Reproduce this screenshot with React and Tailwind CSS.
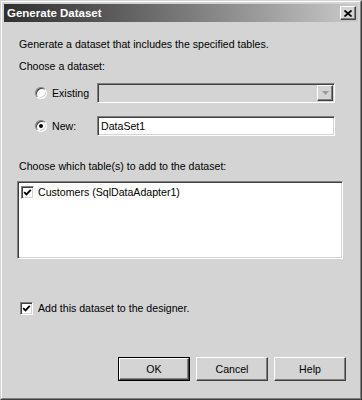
import React from "react";

const font = { fontFamily: '"Liberation Sans", Arial, sans-serif' };

function Radio({ checked }) {
  return (
    <div className="relative w-[12px] h-[12px] rounded-full bg-white border border-t-[#808080] border-l-[#808080] border-r-white border-b-white shadow-[inset_1px_1px_0_#404040,inset_-1px_-1px_0_#d4d4d4] flex items-center justify-center shrink-0">
      {checked && <div className="w-[4px] h-[4px] rounded-full bg-black" />}
    </div>
  );
}

function Check() {
  return (
    <div className="w-[13px] h-[13px] bg-white border border-t-[#808080] border-l-[#808080] border-r-white border-b-white shadow-[inset_1px_1px_0_#404040,inset_-1px_-1px_0_#d4d4d4] flex items-center justify-center shrink-0">
      <svg width="9" height="9" viewBox="0 0 9 9">
        <path d="M1.2 4.2 L3.4 6.4 L7.8 1.8" fill="none" stroke="#000" strokeWidth="1.8" />
      </svg>
    </div>
  );
}

function Button({ children, isDefault }) {
  return (
    <div className={"w-[72px] h-[24px] " + (isDefault ? "border border-black" : "")}>
      <div className="w-full h-full bg-[#d4d4d4] border border-t-white border-l-white border-r-[#404040] border-b-[#404040] shadow-[inset_-1px_-1px_0_#808080] flex items-center justify-center text-[10.6px] text-black">
        {children}
      </div>
    </div>
  );
}

export default function App() {
  return (
    <div style={font} className="w-[362px] h-[400px] bg-[#d4d4d4] border border-t-[#d4d4d4] border-l-[#d4d4d4] border-r-[#404040] border-b-[#404040] text-[10.6px] leading-[13px] text-black">
      <div className="w-full h-full border border-t-white border-l-white border-r-[#808080] border-b-[#808080] p-[2px] flex flex-col">
        {/* Title bar */}
        <div className="h-[18px] bg-linear-to-r from-[#303030] to-[#cacaca] flex items-center justify-between pl-[3px] pr-[2px] shrink-0">
          <span className="text-white font-bold text-[11.5px]">Generate Dataset</span>
          <div className="w-[16px] h-[14px] bg-[#d4d4d4] border border-t-white border-l-white border-r-[#404040] border-b-[#404040] shadow-[inset_-1px_-1px_0_#808080] flex items-center justify-center">
            <svg width="8" height="7" viewBox="0 0 8 7">
              <path d="M0.5 0.5 L7.5 6.5 M7.5 0.5 L0.5 6.5" stroke="#000" strokeWidth="1.7" />
            </svg>
          </div>
        </div>

        {/* Body */}
        <div className="flex flex-col pl-[13px]">
          <div className="mt-[16px] ml-[2px]">Generate a dataset that includes the specified tables.</div>
          <div className="mt-[9px] ml-[2px]">Choose a dataset:</div>

          <div className="mt-[10px] flex items-center h-[20px]">
            <div className="ml-[18px]"><Radio /></div>
            <span className="ml-[5px] w-[45px]">Existing</span>
            <div className="w-[238px] h-[20px] bg-[#d4d4d4] border border-t-[#808080] border-l-[#808080] border-r-white border-b-white shadow-[inset_1px_1px_0_#404040,inset_-1px_-1px_0_#d4d4d4] flex justify-end items-center pr-[1px]">
              <div className="w-[16px] h-[16px] bg-[#d4d4d4] border border-t-white border-l-white border-r-[#404040] border-b-[#404040] shadow-[inset_-1px_-1px_0_#808080] flex items-center justify-center">
                <svg width="7" height="4" viewBox="0 0 7 4">
                  <path d="M0 0 H7 L3.5 4 Z" fill="#9a9a9a" />
                </svg>
              </div>
            </div>
          </div>

          <div className="mt-[13px] flex items-center h-[20px]">
            <div className="ml-[18px]"><Radio checked /></div>
            <span className="ml-[5px] w-[45px]">New:</span>
            <div className="w-[238px] h-[20px] bg-white border border-t-[#808080] border-l-[#808080] border-r-white border-b-white shadow-[inset_1px_1px_0_#404040,inset_-1px_-1px_0_#d4d4d4] flex items-center pl-[3px]">
              DataSet1
            </div>
          </div>

          <div className="mt-[24px] ml-[2px]">Choose which table(s) to add to the dataset:</div>

          <div className="mt-[8px] w-[326px] h-[78px] bg-white border border-t-[#808080] border-l-[#808080] border-r-white border-b-white shadow-[inset_1px_1px_0_#404040,inset_-1px_-1px_0_#d4d4d4] p-[3px]">
            <div className="flex items-center h-[15px]">
              <Check />
              <span className="ml-[4px]">Customers (SqlDataAdapter1)</span>
            </div>
          </div>

          <div className="mt-[43px] flex items-center ml-[3px]">
            <Check />
            <span className="ml-[5px]">Add this dataset to the designer.</span>
          </div>

          <div className="mt-[42px] flex gap-[6px] pl-[101px]">
            <Button isDefault>OK</Button>
            <Button>Cancel</Button>
            <Button>Help</Button>
          </div>
        </div>
      </div>
    </div>
  );
}
